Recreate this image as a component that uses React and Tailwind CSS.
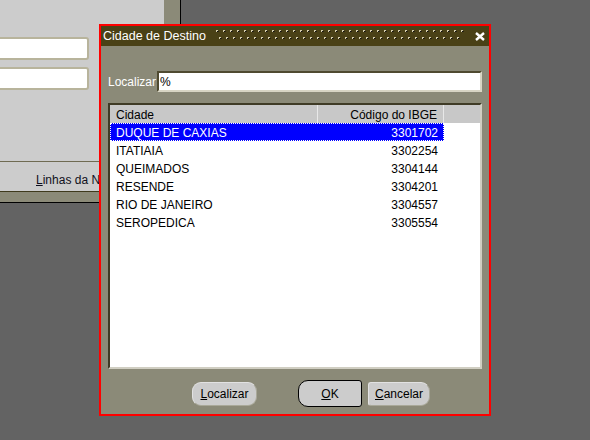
import React from "react";

const cities = [
  { name: "DUQUE DE CAXIAS", code: "3301702" },
  { name: "ITATIAIA", code: "3302254" },
  { name: "QUEIMADOS", code: "3304144" },
  { name: "RESENDE", code: "3304201" },
  { name: "RIO DE JANEIRO", code: "3304557" },
  { name: "SEROPEDICA", code: "3305554" },
];

// dotted grip pattern of the title bar
function Dot({ x, y }) {
  return (
    <g>
      <rect x={x} y={y} width={2} height={1} fill="#d6cfae" />
      <rect x={x} y={y + 1} width={1} height={1} fill="#d6cfae" />
      <rect x={x + 1} y={y + 1} width={1} height={1} fill="#111" />
      <rect x={x + 2} y={y + 1} width={1} height={1} fill="#2a2410" />
    </g>
  );
}

function TitleDots() {
  const dots = [];
  for (let i = 0; i < 36; i++) {
    dots.push(<Dot key={"a" + i} x={1 + i * 7} y={0} />);
    if (i < 35) dots.push(<Dot key={"b" + i} x={4 + i * 7} y={7} />);
  }
  return (
    <svg width="250" height="10" className="self-start mt-[4px] shrink-0">
      {dots}
    </svg>
  );
}

function Button({ children, className }) {
  return (
    <div
      className={`flex items-center justify-center bg-[#cccccc] text-black ${className}`}
    >
      {children}
    </div>
  );
}

export default function App() {
  return (
    <div className="relative w-[590px] h-[440px] overflow-hidden bg-[#636363] font-[Liberation_Sans,Arial,sans-serif] text-[12px]">
      {/* background form window */}
      <div className="absolute left-0 top-0 w-[181px] h-[203px] flex flex-col bg-[#8b8a78] border-r border-b border-black">
        <div className="w-[164px] h-[161px] bg-[#cccccc] flex flex-col gap-[7px] pt-[37px]">
          <div className="-ml-[4px] w-[93px] h-[23px] bg-white border-2 border-[#b8b49c] rounded-[3px]" />
          <div className="-ml-[4px] w-[93px] h-[23px] bg-white border-2 border-[#b8b49c] rounded-[3px]" />
        </div>
        <div className="h-[31px] bg-[#cccccc] border-t border-[#6f6b52] border-b border-b-[#3f3a1c] flex items-center pt-[6px] pl-[36px] text-[#101020]">
          <span>
            <u>L</u>inhas da Nota
          </span>
        </div>
      </div>

      {/* dialog */}
      <div className="absolute left-[99px] top-[24px] w-[392px] h-[392px] border-2 border-[#ff0000] bg-[#8b8a78] flex flex-col">
        <div className="h-[20px] bg-[#4a4116] flex items-center pl-[2px] text-white">
          <span className="w-[112px] shrink-0 whitespace-nowrap text-[12.5px]">Cidade de Destino</span>
          <TitleDots />
          <svg width="10" height="9" className="ml-[10px] shrink-0">
            <path d="M1 1L9 8M9 1L1 8" stroke="#fff" strokeWidth="2.4" />
          </svg>
        </div>

        <div className="flex items-center mt-[25px] pl-[7px]">
          <span className="w-[49px] text-white pt-px">Localizar</span>
          <div className="w-[325px] h-[21px] bg-white border-2 border-t-[#4f4a30] border-l-[#4f4a30] border-b-[#d8d5c4] border-r-[#d8d5c4] flex items-center pl-[1px] pt-px text-black">
            %
          </div>
        </div>

        <div className="mt-[11px] ml-[7px] w-[374px] h-[266px] bg-white border-2 border-t-[#3f3b26] border-l-[#3f3b26] border-b-[#d0cec2] border-r-[#d0cec2] flex flex-col">
          <div className="h-[18px] flex bg-[#c8c8c8] text-black">
            <div className="w-[208px] flex items-center pl-[6px] pt-[2px] border-r border-[#e8e8e8]">
              Cidade
            </div>
            <div className="w-[126px] flex items-center justify-end pr-[6px] pt-[2px] border-r border-[#e8e8e8]">
              Código do IBGE
            </div>
            <div className="flex-1" />
          </div>
          {cities.map((c, i) => (
            <div
              key={c.code}
              className={`h-[18px] w-[334px] flex pt-[2px] ${
                i === 0
                  ? "bg-[#0000ff] text-white border border-dotted border-white"
                  : "text-black border border-transparent"
              }`}
            >
              <div className="w-[207px] flex items-center pl-[5px]">{c.name}</div>
              <div className="w-[125px] flex items-center justify-end pr-[5px]">
                {c.code}
              </div>
            </div>
          ))}
        </div>

        <div className="mt-[11px] h-[27px] flex items-center pl-[91px]">
          <Button className="w-[65px] h-[24px] rounded-[9px] border border-[#e2e2e2] border-b-[#a9a899] border-r-[#a9a899]">
            <span>
              <u>L</u>ocalizar
            </span>
          </Button>
          <Button className="ml-[41px] w-[64px] h-[27px] rounded-l-[10px] rounded-r-[3px] border border-black">
            <span>
              <u>O</u>K
            </span>
          </Button>
          <Button className="ml-[6px] w-[62px] h-[24px] rounded-l-[3px] rounded-r-[9px] border border-[#e2e2e2] border-b-[#a9a899] border-r-[#a9a899]">
            <span>
              <u>C</u>ancelar
            </span>
          </Button>
        </div>
      </div>
    </div>
  );
}
